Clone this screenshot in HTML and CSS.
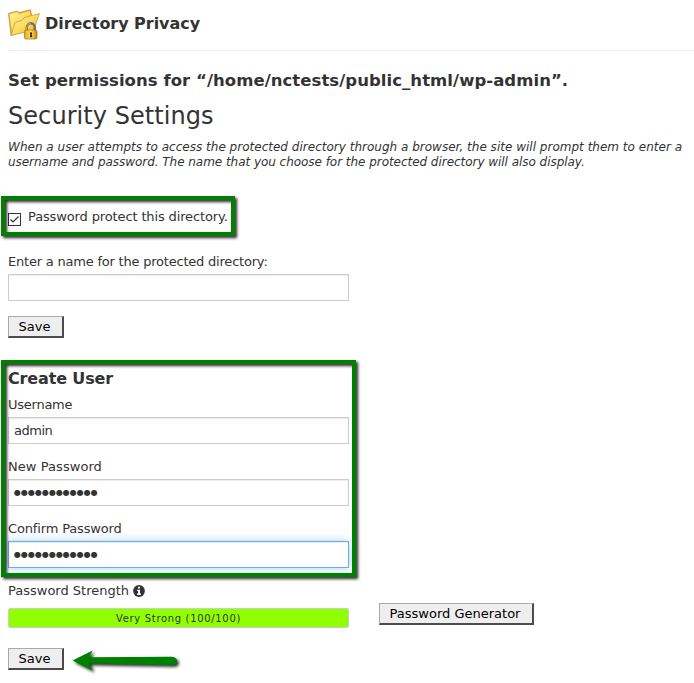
FILE: index.html
```html
<!DOCTYPE html>
<html lang="en">
<head>
<meta charset="utf-8">
<title>Directory Privacy</title>
<link rel="stylesheet" href="styles.css">
</head>
<body>
<header class="page-header">
  <svg class="folder" viewBox="0 0 32 32" width="32" height="32" aria-hidden="true">
    <defs>
      <linearGradient id="gold" x1="0" y1="0" x2="1" y2="1"><stop offset="0" stop-color="#fff5a0"/><stop offset=".5" stop-color="#fbdc5c"/><stop offset="1" stop-color="#eeb02a"/></linearGradient>
      <linearGradient id="lock" x1="0" y1="0" x2="1" y2="0"><stop offset="0" stop-color="#e8a90c"/><stop offset=".5" stop-color="#ffe25a"/><stop offset="1" stop-color="#c9810b"/></linearGradient>
    </defs>
    <path d="M.5 4.500 9 2l2 1.500L22.500 .8 24 8 25 20 3 26.500z" fill="#e3ad3c" stroke="#b88643" stroke-width=".7"/>
    <path d="M1.500 5.300 9 3l2 2L22 2l1.500 15L4 24z" fill="url(#gold)"/>
    <path d="M3 26.500 7 13.500l7-2 2.500-3L31.500 4.500 25.500 21z" fill="url(#gold)" stroke="#c5923a" stroke-width=".7"/>
    <path d="M18.800 22v-3.500a4 4.300 0 0 1 8 0V22" fill="none" stroke="#756c61" stroke-width="2.400"/>
    <path d="M18.700 21v-2.500a4 4.300 0 0 1 4-4" fill="none" stroke="#c6c2bb" stroke-width=".8"/>
    <rect x="16.500" y="21" width="12.500" height="9" rx="1.500" fill="url(#lock)" stroke="#a8710d" stroke-width=".7"/>
    <path d="M22.800 23.200a1.300 1.300 0 0 1 .8 2.300l.7 2.800h-2.500l.6-2.800a1.300 1.300 0 0 1 .4-2.300z" fill="#2a241a"/>
  </svg>
  <h1>Directory Privacy</h1>
</header>
<main>
  <h2 class="permissions">Set permissions for “/home/nctests/public_html/wp-admin”.</h2>
  <h2 class="settings">Security Settings</h2>
  <p class="description"><span class="first-line">When a user attempts to access the protected directory through a browser, the site will prompt them to enter a</span><br>username and password. The name that you choose for the protected directory will also display.</p>

  <div class="frame protect">
    <svg class="check" width="13" height="13" viewBox="0 0 13 13"><rect x=".5" y=".5" width="12" height="12" fill="#fff" stroke="#333"/><path d="M2.500 6.500 5 9l5.500-5.500" fill="none" stroke="#333" stroke-width="1.200"/></svg>
    <span class="check-text">Password protect this directory.</span>
  </div>

  <label class="label name-label">Enter a name for the protected directory:</label>
  <div class="field"></div>
  <button class="btn save">Save</button>

  <section class="frame create">
    <h3>Create User</h3>
    <label class="label username">Username</label>
    <div class="field username">admin</div>
    <label class="label new-pass">New Password</label>
    <div class="field dots">●●●●●●●●●●●●</div>
    <label class="label confirm">Confirm Password</label>
    <div class="field dots focused">●●●●●●●●●●●●</div>
  </section>

  <div class="strength-label">Password Strength
    <svg width="12" height="12" viewBox="0 0 12 12"><circle cx="6" cy="6" r="5.900" fill="#333"/><path d="M5 1.800h2v1.700H5zM4.200 4.700H7v3.800h.9V10H4.100V8.500H5V6.100h-.8z" fill="#fff"/></svg>
  </div>
  <div class="strength-row">
    <div class="meter">Very Strong (100/100)</div>
    <button class="btn generate">Password Generator</button>
  </div>
  <div class="submit-row">
    <button class="btn save">Save</button>
    <svg class="arrow" width="112" height="30" viewBox="0 0 112 30"><path d="M1.500 13.500 21.500 3.500 18.500 10.300 101 9.800q5 .700 5 4.200t-4 4L18.500 16.500 21.500 23.500z" fill="#008000"/></svg>
  </div>
</main>
</body>
</html>
```
FILE: styles.css
```css
* { box-sizing: border-box; }
body {
  margin: 0;
  padding: 0 0 0 8px;
  width: 694px;
  height: 683px;
  overflow: hidden;
  background: #fff;
  color: #333;
  font: 13px/18px Verdana, "DejaVu Sans", sans-serif;
  white-space: nowrap;
}
h1, h2, h3, p { margin: 0; }
.page-header {
  display: flex;
  height: 51px;
  padding-top: 9px;
  border-bottom: 1px solid #eee;
}
.folder { margin-right: 5px; flex: none; }
h1 { font-size: 16px; line-height: 30px; letter-spacing: -.04px; }
.permissions { font-size: 16.5px; line-height: 24px; margin-top: 18px; letter-spacing: .05px; }
.settings { font-size: 24px; line-height: 34px; font-weight: 400; margin-top: 6px; letter-spacing: .06px; }
.description { margin-top: 7px; font-size: 12px; line-height: 15px; font-style: italic; letter-spacing: -.04px; }
.first-line { letter-spacing: .01px; }
.frame { position: relative; margin-left: -7px; padding-left: 7px; }
.frame::after {
  content: "";
  position: absolute;
  inset: 0;
  border: 4px solid #008000;
  filter: drop-shadow(2px 2px 1.500px rgba(0, 0, 0, .85));
  pointer-events: none;
}
.protect { display: flex; width: 234px; height: 40px; margin-top: 26px; padding-top: 12px; }
.check { margin: 5px 7px 0 0; flex: none; }
.check-text { letter-spacing: -.13px; }
.name-label { margin-top: 17px; letter-spacing: -.21px; }
.label { display: block; height: 21px; line-height: 18px; }
.label.username, .label.confirm { letter-spacing: -.15px; }
.label.username { letter-spacing: -.25px; }
.label.new-pass { letter-spacing: .06px; }
.field {
  width: 341px;
  height: 27px;
  padding: 0 5px;
  border: 1px solid #ccc;
  box-shadow: inset 0 1px 1px rgba(0, 0, 0, .08);
  line-height: 25px;
}
.field.username { letter-spacing: -.5px; }
.btn {
  display: block;
  height: 22px;
  padding: 0 2px 0 0;
  border: 1px solid #aaa;
  border-right: 2px solid #4c4c4c;
  border-bottom: 2px solid #4c4c4c;
  background: #eee;
  color: #000;
  font: 13px/18px Verdana, "DejaVu Sans", sans-serif;
}
.save { width: 56px; margin-top: 15px; }
.create { width: 355px; height: 217px; margin-top: 22px; padding-top: 6px; }
h3 { font-size: 16px; line-height: 26px; height: 30px; letter-spacing: -.15px; }
.create .label { height: 21px; }
.create .field { margin-bottom: 14px; }
.field.dots { font-size: 8px; line-height: 26px; padding-left: 5px; }
.focused { border-color: #66afe9; box-shadow: inset 0 1px 1px rgba(0, 0, 0, .08), 0 0 8px rgba(102, 175, 233, .6); }
.strength-label { display: flex; align-items: center; gap: 4px; height: 18px; margin-top: 5px; }
.strength-row { display: flex; height: 28px; margin-top: 3px; }
.meter {
  width: 341px;
  height: 20px;
  margin-top: 5px;
  border: 1px solid #ccc;
  border-radius: 2px;
  background: #90ff00;
  font-size: 10px;
  line-height: 19px;
  text-align: center;
  letter-spacing: .67px;
}
.generate { width: 155px; margin-left: 30px; }
.submit-row { display: flex; margin-top: 15px; }
.submit-row .save { margin-top: 2px; }
.arrow { margin: 1px 0 0 7px; filter: drop-shadow(2px 2px 1.500px rgba(0, 0, 0, .8)); }
```
